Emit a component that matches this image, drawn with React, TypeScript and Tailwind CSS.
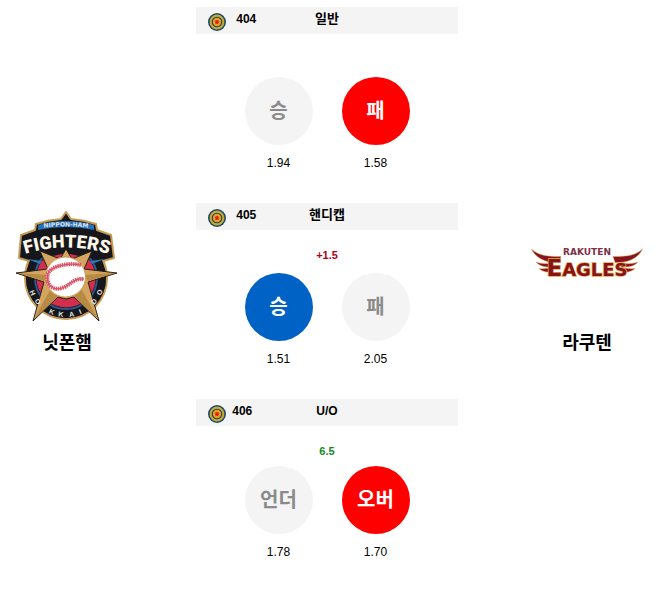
import { clsx } from "clsx";

type Pick = {
  label: string;
  odds: string;
  tone: "idle" | "red" | "blue";
};

type Market = {
  id: string;
  title: string;
  line?: string;
  lineClass?: string;
  compact?: boolean;
  picks: Pick[];
};

const markets: Market[] = [
  {
    id: "404",
    title: "일반",
    picks: [
      { label: "승", odds: "1.94", tone: "idle" },
      { label: "패", odds: "1.58", tone: "red" },
    ],
  },
  {
    id: "405",
    title: "핸디캡",
    line: "+1.5",
    lineClass: "text-[#b00018]",
    picks: [
      { label: "승", odds: "1.51", tone: "blue" },
      { label: "패", odds: "2.05", tone: "idle" },
    ],
  },
  {
    id: "406",
    title: "U/O",
    line: "6.5",
    lineClass: "text-[#128a22]",
    compact: true,
    picks: [
      { label: "언더", odds: "1.78", tone: "idle" },
      { label: "오버", odds: "1.70", tone: "red" },
    ],
  },
];

const tones = {
  idle: "bg-[#f4f4f4] text-[#8b8b8b]",
  red: "bg-[#ff0000] text-white",
  blue: "bg-[#0062c4] text-white",
};

// Letters along the bottom ring of the Fighters badge, in degrees from straight down
const ringLetters = [
  { char: "H", angle: 66 },
  { char: "O", angle: 50 },
  { char: "K", angle: 23 },
  { char: "K", angle: 8 },
  { char: "A", angle: -9 },
  { char: "I", angle: -23 },
  { char: "D", angle: -50 },
  { char: "O", angle: -67 },
];

function TargetIcon() {
  return (
    <svg viewBox="0 0 18 18" className="h-[18px] w-[18px]" aria-hidden="true">
      <circle cx="9" cy="9" r="9" fill="#234a6b" />
      <circle cx="9" cy="9" r="7.4" fill="#c3ab35" />
      <circle cx="9" cy="9" r="5.3" fill="#2c3f52" />
      <circle cx="9" cy="9" r="4.2" fill="#dfa32a" />
      <circle cx="9" cy="9" r="2" fill="#ee1c14" />
    </svg>
  );
}

function FightersLogo() {
  return (
    <svg viewBox="0 0 102 112" className="w-[102px]" role="img" aria-label="Fighters">
      <defs>
        <path id="nippon" d="M20 18 Q50 13 80 18" />
        <path id="fighters" d="M3 45 Q50 28 99 45" />
      </defs>

      {/* badge */}
      <g fill="#15171c" stroke="#c79a55" strokeWidth="2" strokeLinejoin="round">
        <circle cx="50" cy="67" r="41" />
        <path d="M50 1 L55 8 Q68 9 80 13 L81 19 L95 24 L98 47 L87 50 L89 56 L11 56 L13 50 L3 47 L5 24 L19 19 L20 13 Q32 9 45 8 Z" />
      </g>
      <circle cx="50" cy="67" r="40" fill="#15171c" />
      <path d="M22 19 L22 14 Q50 6 78 14 L78 19 Q50 13 22 19Z" fill="#2a6fb0" />

      {/* ring segments */}
      <circle cx="50" cy="67" r="31" fill="none" stroke="#2b5690" strokeWidth="2" />
      <circle cx="50" cy="67" r="25" fill="none" stroke="#d42e4c" strokeWidth="9" />
      <path d="M11 46 L17 34 L83 34 L89 46 L72 47 L50 42 L28 47Z" fill="#15171c" />
      <path d="M11 48 L26 50 L24 53Z M89 48 L74 50 L76 53Z" fill="#2b78b8" />

      {/* star */}
      <path
        d="M50 38 L56 48 L76 40 L68 58 L101 62 L72 71 L83 110 L58 86 L50 88 L42 86 L17 110 L28 71 L0 62 L32 58 L24 40 L44 48 Z"
        fill="#d4a55e"
        stroke="#282118"
        strokeWidth="1"
      />
      <path d="M2 62 L32 64 L28 70Z M99 62 L68 64 L72 70Z M18 108 L34 79 L42 85Z M82 108 L66 79 L58 85Z" fill="#b98a44" />

      {/* ball */}
      <circle cx="49.5" cy="66" r="20" fill="#fff" stroke="#c99c55" strokeWidth="1" />
      <path d="M65 54 C50 51 33 56 31.5 64 C30 74 37 80 46 77 C55 74 57 67 68 68" fill="none" stroke="#d85268" strokeWidth="4" strokeDasharray="1.5 0.7" />
      <path d="M65 54 C50 51 33 56 31.5 64 C30 74 37 80 46 77 C55 74 57 67 68 68" fill="none" stroke="#d85268" strokeWidth="1.2" />

      <text fontSize="6" fill="#d7e6f5" textAnchor="middle" className="font-['DejaVu_Sans',sans-serif] font-bold">
        <textPath href="#nippon" startOffset="50%">NIPPON-HAM</textPath>
      </text>
      <text
        className="font-[Roboto,'Liberation_Sans',sans-serif] font-black"
        fontSize="18"
        fill="#fff8e8"
        textAnchor="middle"
      >
        <textPath href="#fighters" startOffset="50%">FIGHTERS</textPath>
      </text>
      <g className="font-['Liberation_Sans',sans-serif] font-bold">
        {ringLetters.map((l, i) => (
          <text key={i} x="50" y="106" fontSize="7" fill="#e4e4e4" textAnchor="middle" transform={`rotate(${l.angle} 50 67)`}>
            {l.char}
          </text>
        ))}
      </g>
    </svg>
  );
}

function EaglesLogo() {
  return (
    <svg viewBox="0 0 112 38" className="w-[112px]" role="img" aria-label="Rakuten Eagles">
      <g id="wing" fill="#86141c" stroke="#e9a94b" strokeWidth="0.5">
        <path d="M0.5 1 C7 7 14 8.5 30 8.5 L28 14.5 C16 15 5 11 0.5 1Z" />
        <path d="M5 14 C10 16 16 16 22 15 L22 19 C15 19.5 9 18.5 5 14Z" />
        <path d="M8 20.5 C13 21 17 20.5 22 19 L22 23 C16 25 12 24 8 20.5Z" />
      </g>
      <use href="#wing" transform="translate(112 0) scale(-1 1)" />
      <text x="56" y="7" fontSize="9" textAnchor="middle" fill="#7d3048" className="font-['DejaVu_Sans',sans-serif] font-bold">
        RAKUTEN
      </text>
      <text
        x="56"
        y="28"
        textAnchor="middle"
        fontSize="18"
        fill="#86141c"
        stroke="#e9a94b"
        strokeWidth="1.4"
        paintOrder="stroke"
        className="font-['DejaVu_Sans',sans-serif] font-bold"
      >
        <tspan fontSize="23">E</tspan>AGLES
      </text>
    </svg>
  );
}

function Team({ name, children }: { name: string; children: React.ReactNode }) {
  return (
    <div className="flex w-[134px] shrink-0 flex-col items-center gap-2 pb-1">
      <div className="flex h-[112px] items-center">{children}</div>
      <h2 className="text-[18px] leading-6 font-bold">{name}</h2>
    </div>
  );
}

function MarketCard({ market }: { market: Market }) {
  return (
    <section>
      <header className="grid h-[27px] grid-cols-3 bg-[#f4f4f4] leading-6 font-bold">
        <div className={clsx("flex pl-3 text-[12px]", market.compact ? "gap-1.5" : "gap-2.5")}>
          <span className="pt-1.5">
            <TargetIcon />
          </span>
          <span>{market.id}</span>
        </div>
        <h3 className={clsx("text-center", market.compact ? "text-[12px]" : "text-[13px]")}>{market.title}</h3>
      </header>
      <p
        className={clsx(
          "pt-4 text-center text-[11px] leading-[18px] font-bold",
          market.compact ? "h-10" : "h-[43px]",
          market.lineClass
        )}
      >
        {market.line}
      </p>
      <div className="flex justify-center gap-[29px]">
        {market.picks.map((pick) => (
          <div key={pick.label} className="flex flex-col items-center gap-2">
            <button
              type="button"
              className={clsx("h-[68px] w-[68px] rounded-full text-[20px] leading-6 font-bold", tones[pick.tone])}
            >
              {pick.label}
            </button>
            <span className="text-[12px] leading-5">{pick.odds}</span>
          </div>
        ))}
      </div>
    </section>
  );
}

export default function App() {
  return (
    <main className="flex items-center justify-between bg-white pt-[7px] pr-1 pb-6 font-['Liberation_Sans','Noto_Sans_CJK_KR',sans-serif] text-black">
      <Team name="닛폰햄">
        <FightersLogo />
      </Team>
      <div className="flex w-2/5 flex-col gap-[30px]">
        {markets.map((market) => (
          <MarketCard key={market.id} market={market} />
        ))}
      </div>
      <Team name="라쿠텐">
        <EaglesLogo />
      </Team>
    </main>
  );
}
